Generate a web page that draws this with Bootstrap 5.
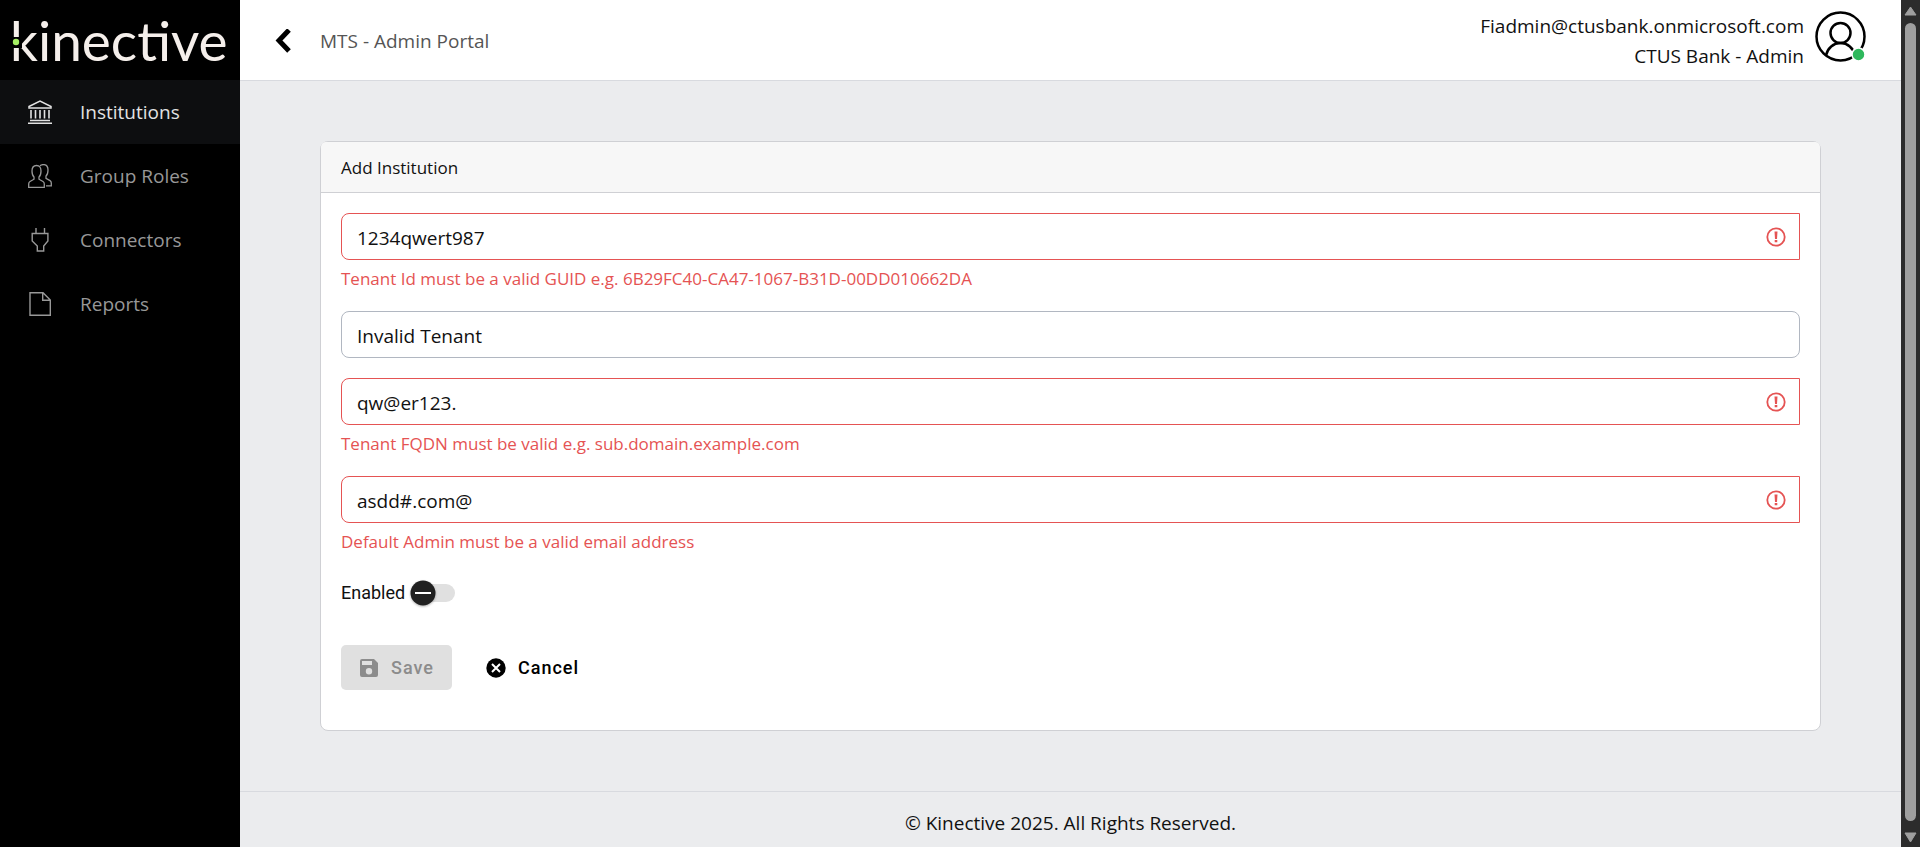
<!DOCTYPE html>
<html lang="en">
<head>
<meta charset="utf-8">
<meta name="viewport" content="width=device-width, initial-scale=1">
<title>MTS - Admin Portal</title>
<link href="https://cdn.jsdelivr.net/npm/bootstrap@5.3.0/dist/css/bootstrap.min.css" rel="stylesheet">
<style>
  body { font-family: "Open Sans", "Noto Sans", sans-serif; font-size: 19px; line-height: 30px; color: #111; background: #ebecee; }
  .sidebar { width: 240px; background: #000; }
  .brand { height: 80px; padding-left: 10px; font-family: Lato, sans-serif; font-size: 55px; line-height: 80px; color: #f5efeb; text-decoration: none; }
  .brand svg { left: 10px; top: 16px; }
  .side-link { height: 64px; padding: 0 28px; gap: 28px; color: #989898; }
  .side-link:hover, .side-link.active { color: #e2e2e2; }
  .side-link.active { background: #0d0e10; }
  .side-link svg, .back svg { fill: none; stroke: currentColor; }
  .topbar { height: 81px; padding: 2px 35px 0 32px; background: #fff; border-bottom: 1px solid #d8dadf; }
  .back { width: 24px; color: #000; }
  .page-title { color: #555; }
  .account { gap: 11px; }
  .page-area { padding: 60px 80px; }
  .panel { border: 1px solid #cfd0d4; border-radius: 8px; }
  .panel > .card-header { padding: 11px 20px 9px; font-size: 17px; border-color: #cfd0d4; background: #f7f7f7; }
  .panel > .card-body { padding: 20px 20px 40px; }
  .field { margin-bottom: 20px; }
  .field .form-control { height: 47px; padding: 2px 15px 0; font-size: 19px; color: #111; border-color: #b1b7c1; border-radius: 8px; }
  .field .form-control.is-invalid { border-color: #e55353; border-radius: 8px 0 0 8px; background-image: none; }
  .field-icon { right: 14px; top: 14px; }
  .help { padding-top: 6px; font-size: 17px; line-height: 25px; color: #e55353; }
  .material { font-family: Roboto, sans-serif; font-size: 18px; }
  .toggle-box { width: 46px; height: 26px; margin-left: 5px; }
  .toggle-box input { appearance: none; width: 44px; height: 18px; margin: 4px 1px; border-radius: 9px; background: #e0e0e0; display: block; }
  .toggle-box svg { left: 0; top: 0; pointer-events: none; filter: drop-shadow(0 1px 1px rgba(0,0,0,.3)); }
  .actions { margin-top: 37px; gap: 16px; }
  .actions .btn { height: 45px; padding: 0 18px; gap: 12px; font-weight: 500; letter-spacing: 1px; border: 0; border-radius: 5px; }
  .actions .btn:disabled { background: #e0e0e0; color: #8c8c8c; opacity: 1; }
  .actions .btn-cancel { color: #000; }
  .foot { padding: 16px 0 10px; border-top: 1px solid #d8dadf; }
  .scroller { width: 19px; background: #2c2c2c; padding: 6px 0 5px; gap: 7px; }
  .scroller .thumb { width: 11px; border-radius: 6px; background: #9f9f9f; }
</style>
</head>
<body>
<div class="d-flex min-vh-100">
  <nav class="sidebar flex-shrink-0">
    <a class="brand d-block position-relative" href="#" aria-label="kinective">kinective
      <svg class="position-absolute" width="12" height="48" aria-hidden="true"><path fill="#000" d="M0 21h12v11H0z"/><circle cx="6" cy="26" r="3.200" fill="#a5ef63"/></svg>
    </a>
    <div class="nav flex-column">
      <a class="side-link active nav-link d-flex align-items-center" href="#">
        <svg width="24" height="24" viewBox="0 0 24 24"><path stroke-width="1.5" d="M1 6.5 12 1l11 5.500V8H1zM2 20.500h20M0 23.300h24"/><path stroke-width="1.600" d="M3 10v8.500M7.500 10v8.500M12 10v8.500M16.500 10v8.500M21 10v8.500"/></svg>
        <span>Institutions</span></a>
      <a class="side-link nav-link d-flex align-items-center" href="#">
        <svg width="24" height="24" viewBox="0 0 24 24" stroke-width="1.300"><path d="M8.500 1.500C5.500 1.500 4 3.500 4 7c0 2.800.7 4.900 2 6v2.200l-4 2.300c-1 .6-1.300 1.400-1.300 2.500v3.300h15.600V20c0-1.100-.3-1.900-1.300-2.500l-4-2.300V13c1.300-1.100 2-3.200 2-6 0-3.500-1.500-5.500-4.500-5.500z"/><path d="M12 1.700c.9-.8 2-1.100 3.500-1.100 3.100 0 4.500 2 4.500 5.400 0 2.800-.7 5-2 6v2.300l4 2.300c1 .6 1.300 1.300 1.300 2.300v3H18"/></svg>
        <span>Group Roles</span></a>
      <a class="side-link nav-link d-flex align-items-center" href="#">
        <svg width="24" height="24" viewBox="0 0 24 24" stroke-width="1.400"><path d="M8 0v5M16.500 0v5M4.200 5.500h15.700V13l-4.200 5v5H9.300v-5l-5.100-5z"/></svg>
        <span>Connectors</span></a>
      <a class="side-link nav-link d-flex align-items-center" href="#">
        <svg width="24" height="24" viewBox="0 0 24 24" stroke-width="1.400"><path d="M2 .7h13l7.300 7.300v15.300H2zM14.700.7v7.600h7.600"/></svg>
        <span>Reports</span></a>
    </div>
  </nav>

  <div class="flex-grow-1 d-flex flex-column">
    <header class="topbar d-flex align-items-center">
      <a class="back d-flex" href="#" aria-label="Back"><svg width="24" height="24" viewBox="0 0 24 24"><path stroke-width="5" d="M17 1 7 11.500 17 22"/></svg></a>
      <span class="page-title ms-4">MTS - Admin Portal</span>
      <div class="account ms-auto d-flex align-items-start">
        <div class="text-end">Fiadmin@ctusbank.onmicrosoft.com<br>CTUS Bank - Admin</div>
        <svg width="51" height="51" viewBox="0 0 51 51" role="img" aria-label="Account"><g fill="none" stroke="#000" stroke-width="2.500"><circle cx="25.500" cy="25.500" r="24"/><circle cx="25.500" cy="22" r="10"/><path d="M11 44.500c1.500-7.500 7.500-12.500 14.500-12.500S38.500 37 40 44.500"/></g><circle cx="43.500" cy="43.500" r="6.500" fill="#2eb85c" stroke="#fff" stroke-width="1.500"/></svg>
      </div>
    </header>

    <main class="page-area flex-grow-1">
      <div class="panel card">
        <div class="card-header">Add Institution</div>
        <form class="card-body">
          <div class="field">
            <div class="position-relative">
              <input class="form-control is-invalid" type="text" value="1234qwert987" aria-label="Tenant Id" aria-describedby="h1">
              <svg class="field-icon position-absolute" width="20" height="20"><use href="#alert"/></svg>
            </div>
            <div class="help" id="h1">Tenant Id must be a valid GUID e.g. 6B29FC40-CA47-1067-B31D-00DD010662DA</div>
          </div>
          <div class="field">
            <input class="form-control" type="text" value="Invalid Tenant" aria-label="Tenant name">
          </div>
          <div class="field">
            <div class="position-relative">
              <input class="form-control is-invalid" type="text" value="qw@er123." aria-label="Tenant FQDN" aria-describedby="h2">
              <svg class="field-icon position-absolute" width="20" height="20"><use href="#alert"/></svg>
            </div>
            <div class="help" id="h2">Tenant FQDN must be valid e.g. sub.domain.example.com</div>
          </div>
          <div class="field">
            <div class="position-relative">
              <input class="form-control is-invalid" type="text" value="asdd#.com@" aria-label="Default Admin" aria-describedby="h3">
              <svg class="field-icon position-absolute" width="20" height="20"><use href="#alert"/></svg>
            </div>
            <div class="help" id="h3">Default Admin must be a valid email address</div>
          </div>
          <div class="material d-flex align-items-center pt-1">
            <label for="enabled">Enabled</label>
            <div class="toggle-box position-relative">
              <input type="checkbox" role="switch" id="enabled">
              <svg class="position-absolute" width="26" height="26"><circle cx="13" cy="13" r="12.500" fill="#212121"/><path d="M5 13h16" stroke="#fff" stroke-width="2"/></svg>
            </div>
          </div>
          <div class="actions material d-flex">
            <button class="btn material d-flex align-items-center" type="submit" disabled>
              <svg width="20" height="20" viewBox="0 0 20 20"><path fill="currentColor" fill-rule="evenodd" d="M3 1h12l4 4v12a2 2 0 0 1-2 2H3a2 2 0 0 1-2-2V3a2 2 0 0 1 2-2zm0 2v4h10V3zm7 7a3.200 3.200 0 1 0 0 6.400 3.200 3.200 0 0 0 0-6.400z"/></svg>
              Save</button>
            <button class="btn btn-cancel material d-flex align-items-center" type="button">
              <svg width="20" height="20" viewBox="0 0 20 20"><circle cx="10" cy="10" r="9.700"/><path d="m6 6 8 8M14 6l-8 8" stroke="#fff" stroke-width="2"/></svg>
              Cancel</button>
          </div>
        </form>
      </div>
    </main>

    <footer class="foot text-center">© Kinective 2025. All Rights Reserved.</footer>
  </div>

  <div class="scroller flex-shrink-0 d-flex flex-column align-items-center" aria-hidden="true">
    <svg width="13" height="10"><path fill="#9f9f9f" stroke="#9f9f9f" stroke-linejoin="round" d="M6.500 1 12 9H1z"/></svg>
    <div class="thumb flex-grow-1"></div>
    <svg class="mt-1" width="13" height="11"><path fill="#9f9f9f" stroke="#9f9f9f" stroke-linejoin="round" d="M6.500 10 12 1H1z"/></svg>
  </div>
</div>

<svg width="0" height="0" class="position-absolute" aria-hidden="true"><symbol id="alert" viewBox="0 0 20 20"><circle cx="10" cy="10" r="8.700" fill="none" stroke="#e55353" stroke-width="1.800"/><path fill="#e55353" d="M8.500 4.500h3l-.5 7.500H9zM8.700 13h2.600v2.200H8.700z"/></symbol></svg>
<script src="https://cdn.jsdelivr.net/npm/bootstrap@5.3.0/dist/js/bootstrap.bundle.min.js"></script>
</body>
</html>
